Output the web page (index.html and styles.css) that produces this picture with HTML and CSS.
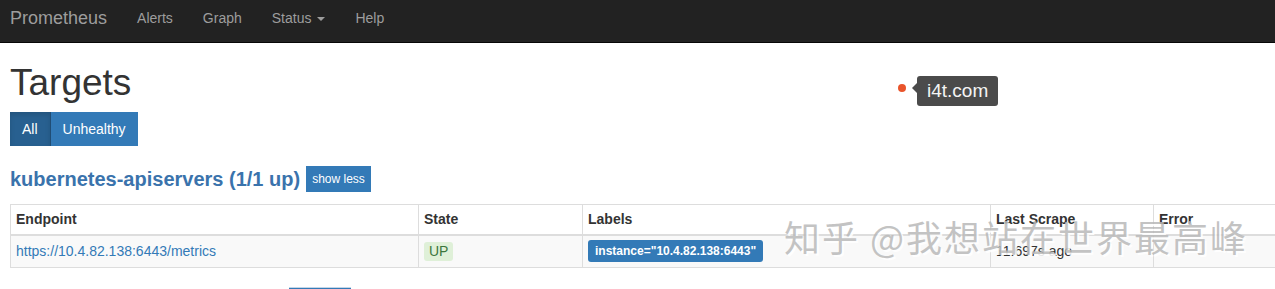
FILE: index.html
```html
<!DOCTYPE html>
<html lang="en">
<head>
    <meta charset="UTF-8">
    <meta name="viewport" content="width=device-width, initial-scale=1.0">
    <title>Prometheus Time Series Collection and Processing Server</title>
    <link rel="stylesheet" href="styles.css">
</head>
<body>
    <nav class="navbar">
        <a class="brand" href="#">Prometheus</a>
        <ul class="nav-links">
            <li><a href="#">Alerts</a></li>
            <li><a href="#">Graph</a></li>
            <li><a href="#">Status <span class="caret"></span></a></li>
            <li><a href="#">Help</a></li>
        </ul>
    </nav>

    <div class="container">
        <h1>Targets</h1>

        <div class="btn-group">
            <button type="button" class="btn active">All</button>
            <button type="button" class="btn">Unhealthy</button>
        </div>

        <div class="job-header">
            <h2><a href="#">kubernetes-apiservers (1/1 up)</a></h2>
            <button type="button" class="btn-small">show less</button>
        </div>

        <table class="targets">
            <thead>
                <tr>
                    <th class="col-endpoint">Endpoint</th>
                    <th class="col-state">State</th>
                    <th class="col-labels">Labels</th>
                    <th class="col-scrape">Last Scrape</th>
                    <th class="col-error">Error</th>
                </tr>
            </thead>
            <tbody>
                <tr>
                    <td><a href="#">https://10.4.82.138:6443/metrics</a></td>
                    <td><span class="state-up">UP</span></td>
                    <td><span class="label-badge">instance="10.4.82.138:6443"</span></td>
                    <td>11.697s ago</td>
                    <td></td>
                </tr>
            </tbody>
        </table>

        <div class="next-job"></div>
    </div>

    <!-- annotation overlay from the original capture -->
    <div class="pin">
        <span class="pin-dot"></span>
        <span class="pin-tip">i4t.com</span>
    </div>

    <div class="watermark">知乎 @我想站在世界最高峰</div>
</body>
</html>
```

FILE: styles.css
```css
body {
    font-family: "Liberation Sans", Arial, sans-serif;
    font-size: 14px;
    line-height: 1.42857;
    color: #333;
    margin: 0;
    padding: 0;
    background: #fff;
    overflow-x: hidden;
    position: relative;
}

a {
    color: #337ab7;
    text-decoration: none;
}

.navbar {
    display: flex;
    align-items: flex-start;
    height: 43px;
    box-sizing: border-box;
    padding: 7px 0 0 10px;
    background-color: #222;
    border-bottom: 1px solid #080808;
}

.brand {
    font-size: 18px;
    line-height: 22px;
    color: #9d9d9d;
    padding-right: 15px;
}

.nav-links {
    display: flex;
    list-style: none;
    margin: 0;
    padding: 1px 0 0;
}

.nav-links a {
    display: block;
    padding: 0 15px;
    color: #9d9d9d;
    line-height: 20px;
}

.caret {
    display: inline-block;
    width: 0;
    height: 0;
    margin-left: 2px;
    vertical-align: middle;
    border-top: 4px solid;
    border-left: 4px solid transparent;
    border-right: 4px solid transparent;
}

.container {
    padding: 0 10px;
}

h1 {
    font-size: 37px;
    font-weight: 500;
    line-height: 1.1;
    margin: 20px 0 8px;
}

.btn-group {
    display: flex;
}

.btn {
    font-family: inherit;
    font-size: 14px;
    line-height: 20px;
    padding: 7px 12px;
    border: none;
    color: #fff;
    background-color: #337ab7;
    cursor: pointer;
}

.btn.active {
    background-color: #286090;
    box-shadow: inset 0 3px 5px rgba(0, 0, 0, 0.125);
    border-right: 1px solid #204d74;
}

.job-header {
    display: flex;
    align-items: center;
    gap: 6px;
    margin-top: 20px;
}

h2 {
    font-size: 20px;
    font-weight: bold;
    margin: 0;
    line-height: 26px;
}

h2 a {
    color: #3a73ac;
}

.btn-small {
    font-family: inherit;
    font-size: 12px;
    line-height: 20px;
    padding: 3px 6px;
    border: none;
    color: #fff;
    background-color: #337ab7;
}

.targets {
    border-collapse: collapse;
    margin-top: 12px;
    width: 1340px;
    table-layout: fixed;
    border: 1px solid #ddd;
}

.targets th,
.targets td {
    border: 1px solid #ddd;
    padding: 4px 5px 5px;
    text-align: left;
    vertical-align: middle;
    line-height: 20px;
}

.targets th {
    border-bottom-width: 2px;
}

.targets tbody tr {
    background-color: #f9f9f9;
}

.col-endpoint { width: 397px; }
.col-state { width: 153px; }
.col-labels { width: 397px; }
.col-scrape { width: 152px; }
.col-error { width: 190px; }

.state-up {
    display: inline-block;
    padding: 0 5px;
    line-height: 19px;
    border-radius: 3px;
    background-color: #dff0d8;
    color: #3c763d;
}

.label-badge {
    display: inline-block;
    padding: 4px 7px;
    line-height: 14px;
    font-size: 12px;
    font-weight: bold;
    color: #fff;
    background-color: #337ab7;
    border-radius: 3px;
}

.next-job {
    margin: 19px 0 0 279px;
    width: 62px;
    height: 20px;
    border-top: 1px solid #c5d6e8;
    background-color: #337ab7;
}

.pin {
    position: absolute;
    left: 898px;
    top: 76px;
    display: flex;
    align-items: center;
}

.pin-dot {
    width: 8px;
    height: 8px;
    border-radius: 50%;
    background-color: #e9542b;
    margin-right: 11px;
    margin-top: -7px;
}

.pin-tip {
    position: relative;
    background-color: #4b4b4b;
    color: #f4f4f4;
    font-size: 19px;
    line-height: 30px;
    padding: 0 10px;
    border-radius: 3px;
}

.pin-tip::before {
    content: "";
    position: absolute;
    left: -5px;
    top: 7px;
    border-top: 5px solid transparent;
    border-bottom: 5px solid transparent;
    border-right: 5px solid #4b4b4b;
}

.watermark {
    position: absolute;
    left: 784px;
    top: 214px;
    font-family: "Noto Sans CJK SC", sans-serif;
    font-size: 36px;
    line-height: 44px;
    letter-spacing: 2px;
    color: rgba(185, 185, 185, 0.85);
    text-shadow: 2px 2px 0 rgba(255, 255, 255, 0.9);
    white-space: nowrap;
    pointer-events: none;
}
```
